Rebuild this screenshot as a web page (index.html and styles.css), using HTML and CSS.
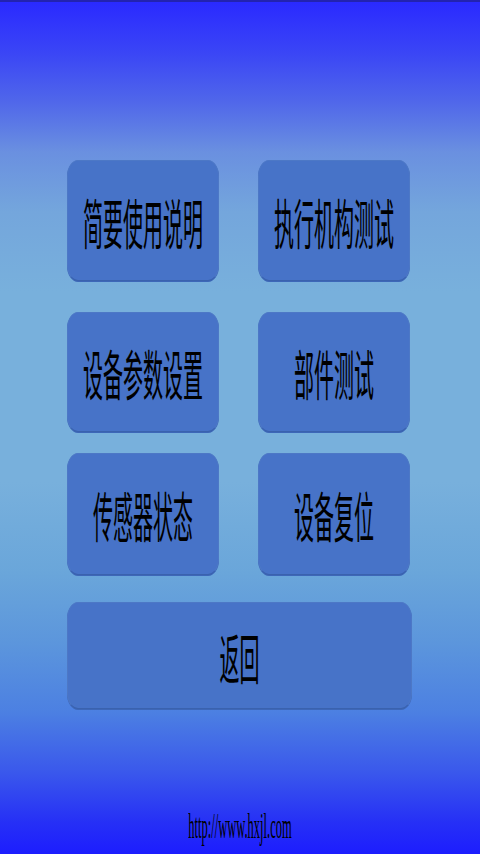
FILE: index.html
```html
<!DOCTYPE html>
<html lang="zh">
<head>
<meta charset="utf-8">
<title>菜单</title>
<link rel="stylesheet" href="styles.css">
</head>
<body>
<div class="screen">
  <main class="menu">
    <div class="row row-1">
      <button class="btn"><span class="label">简要使用说明</span></button>
      <button class="btn"><span class="label">执行机构测试</span></button>
    </div>
    <div class="row row-2">
      <button class="btn"><span class="label">设备参数设置</span></button>
      <button class="btn"><span class="label">部件测试</span></button>
    </div>
    <div class="row row-3">
      <button class="btn"><span class="label">传感器状态</span></button>
      <button class="btn"><span class="label">设备复位</span></button>
    </div>
    <div class="row row-4">
      <button class="btn btn-wide"><span class="label">返回</span></button>
    </div>
  </main>
  <footer class="footer"><span class="url">http://www.hxjl.com</span></footer>
</div>
</body>
</html>
```

FILE: styles.css
```css
html, body {
  margin: 0;
  padding: 0;
}

body {
  width: 480px;
  height: 854px;
  overflow: hidden;
}

.screen {
  height: 854px;
  box-sizing: border-box;
  display: flex;
  flex-direction: column;
  border-top: 2px solid #2323b0;
  background: linear-gradient(to bottom,
    #2a2aff 0px,
    #3a45f6 50px,
    #5067ea 100px,
    #6a90e0 150px,
    #74a6dc 210px,
    #78b0dc 290px,
    #78b0dc 480px,
    #6aa6da 570px,
    #5c96dc 640px,
    #4c80e2 710px,
    #3a58ec 770px,
    #2630f6 820px,
    #1c1cff 854px);
}

.menu {
  padding: 158px 0 0 67px;
  display: flex;
  flex-direction: column;
}

.row {
  display: flex;
  gap: 39px;
}

.row-1 { height: 121px; }
.row-2 { height: 120px; margin-top: 31px; }
.row-3 { height: 122px; margin-top: 21px; }
.row-4 { height: 107px; margin-top: 27px; }

.btn {
  width: 152px;
  height: 100%;
  box-sizing: border-box;
  padding: 0;
  margin: 0;
  border: 1px solid #4d78c6;
  border-bottom-color: #3a62ae;
  border-radius: 11px / 16px;
  background: #4773c8;
  box-shadow: 0 1px 0 #3d67b8;
  display: flex;
  align-items: center;
  justify-content: center;
  font-family: "Noto Sans CJK SC", "Noto Sans", sans-serif;
  color: #000;
}

.btn-wide {
  width: 345px;
}

.label {
  display: inline-block;
  font-size: 20px;
  line-height: 20px;
  font-weight: 400;
  transform: translateY(2px) scaleY(2.7);
  letter-spacing: 0;
}

.footer {
  margin-top: auto;
  padding-bottom: 19px;
  text-align: center;
}

.url {
  display: inline-block;
  font-family: "Liberation Serif", "Times New Roman", serif;
  font-size: 12.5px;
  line-height: 14px;
  color: #000;
  transform: scaleY(2.8);
}
```
